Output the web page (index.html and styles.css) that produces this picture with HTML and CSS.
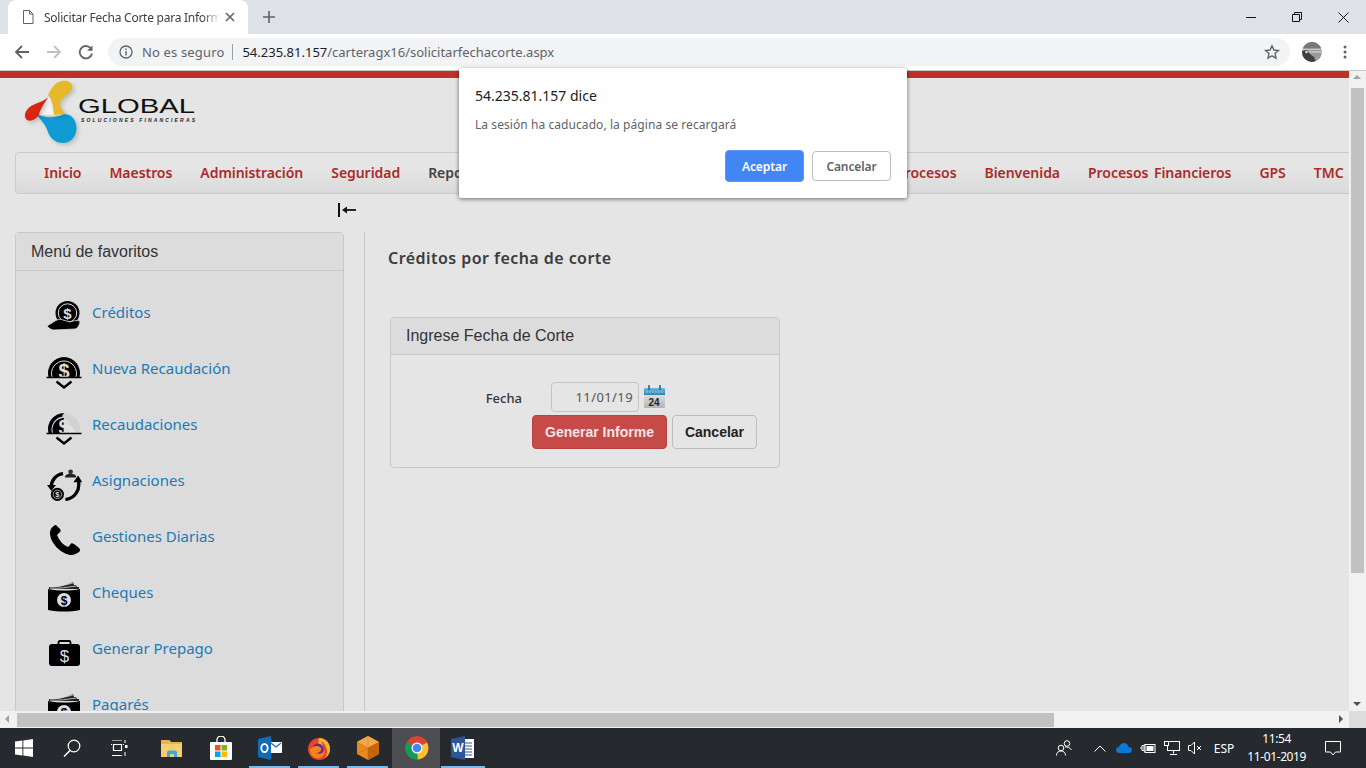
FILE: index.html
```html
<!DOCTYPE html>
<html lang="es">
<head>
  <meta charset="UTF-8">
  <title>Solicitar Fecha Corte para Informe</title>
  <link rel="stylesheet" href="styles.css">
</head>
<body>

  <!-- barra de pestañas -->
  <div class="tabstrip">
    <div class="tab">
      <svg class="tab-doc" width="12" height="14" viewBox="0 0 12 14"><path d="M1.5 .5h6l3.500 3.500v9.500h-9.500z M7.500 .5v3.500h3.500" fill="none" stroke="#5f6368"/></svg>
      <span class="tab-title">Solicitar Fecha Corte para Informe</span>
      <svg class="tab-x" width="10" height="10" viewBox="0 0 10 10"><path d="M1 1l8 8M9 1l-8 8" stroke="#5f6368" stroke-width="1.600"/></svg>
    </div>
    <svg class="tab-new" width="12" height="12" viewBox="0 0 12 12"><path d="M6 0v12M0 6h12" stroke="#5f6368" stroke-width="1.600"/></svg>
    <div class="winbtns">
      <svg width="10" height="10" viewBox="0 0 10 10"><path d="M0 5.500h10" stroke="#111"/></svg>
      <svg width="10" height="10" viewBox="0 0 10 10"><path d="M.5 2.500h7v7h-7z M2.500 2.500v-2h7v7h-2" fill="none" stroke="#111"/></svg>
      <svg width="11" height="11" viewBox="0 0 11 11"><path d="M.5 .5l10 10M10.500 .5l-10 10" stroke="#111"/></svg>
    </div>
  </div>

  <!-- barra de direcciones -->
  <div class="toolbar">
    <svg class="tool" width="16" height="16" viewBox="0 0 16 16"><path d="M15 8H2M8 2L2 8l6 6" fill="none" stroke="#5f6368" stroke-width="1.800"/></svg>
    <svg class="tool" width="16" height="16" viewBox="0 0 16 16"><path d="M1 8h13M8 2l6 6-6 6" fill="none" stroke="#bdc1c6" stroke-width="1.800"/></svg>
    <svg class="tool" width="16" height="16" viewBox="0 0 16 16"><path d="M13.500 5.500A6.200 6.200 0 1 0 14 9.500" fill="none" stroke="#5f6368" stroke-width="1.800"/><path d="M14.500 1.500v5.300h-5.300z" fill="#5f6368"/></svg>
    <div class="omnibox">
      <svg width="14" height="14" viewBox="0 0 14 14"><circle cx="7" cy="7" r="6" fill="none" stroke="#5f6368" stroke-width="1.300"/><path d="M7 6v4.500M7 3.500v1.500" stroke="#5f6368" stroke-width="1.400"/></svg>
      <span class="notsafe">No es seguro</span>
      <span class="url"><b>54.235.81.157</b>/carteragx16/solicitarfechacorte.aspx</span>
      <svg class="star" width="16" height="16" viewBox="0 0 16 16"><path d="M8 1.800l1.900 4.200 4.600.5-3.400 3.100.9 4.500L8 11.800l-4 2.300.9-4.500L1.500 6.500l4.600-.5z" fill="none" stroke="#5f6368" stroke-width="1.400"/></svg>
    </div>
    <svg class="avatar" width="20" height="20" viewBox="0 0 20 20"><defs><clipPath id="av"><circle cx="10" cy="10" r="10"/></clipPath></defs><g clip-path="url(#av)"><rect width="20" height="20" fill="#9a9a9a"/><rect y="7" width="20" height="1" fill="#c8c8c8"/><rect y="9" width="20" height="2" fill="#bdbdbd"/><rect y="0" width="20" height="6" fill="#777"/><path d="M0 9l5-1 3 4 4 3 2 5H0z" fill="#3f3f3f"/><circle cx="4.500" cy="10" r="1.300" fill="#e0e0e0"/></g></svg>
    <svg class="dots" width="4" height="14" viewBox="0 0 4 14"><circle cx="2" cy="2" r="1.500" fill="#5f6368"/><circle cx="2" cy="7" r="1.500" fill="#5f6368"/><circle cx="2" cy="12" r="1.500" fill="#5f6368"/></svg>
  </div>

  <!-- ventana de la pagina -->
  <div class="viewport">
    <div class="page">
      <div class="redbar"></div>

      <div class="logo-row">
        <svg class="logo" width="180" height="70" viewBox="0 0 180 70">
          <path class="logo-blobs" d="M27 18L16 37l26 1z" fill="#f4f4f4"/>
          <path class="logo-blobs" d="M14 36C20 39 32 41 41 36.500C49 35 54.500 42 54.500 50C54.500 59 48 65 41 65C33 65 28 60 26 54C24 47 19 42 14 36z" fill="#0f9bd3"/>
          <path class="logo-blobs" d="M26 17C29 12 32 4 40 3C47 2 52 6 49.500 12C47 17 38 20 38 26C38 30 41 33 43 36L32 37C31 30 31 22 26 17z" fill="#e8b82b"/>
          <path class="logo-blobs" d="M27 18C24 23 16 24 9 28C3 32 1 39 5 42C9 44 14 41 17 37C18 31 22 26 27 18z" fill="#d9240f"/>
          <text class="logo-name" x="56" y="35" textLength="117" lengthAdjust="spacingAndGlyphs">GLOBAL</text>
          <text class="logo-sub" x="59" y="44" textLength="114" lengthAdjust="spacing">SOLUCIONES FINANCIERAS</text>
        </svg>
      </div>

      <nav class="mainnav">
        <a href="#">Inicio</a>
        <a href="#">Maestros</a>
        <a href="#">Administración</a>
        <a href="#">Seguridad</a>
        <a href="#" class="current">Reportes</a>
        <span class="nav-covered"></span>
        <a href="#">Procesos</a>
        <a href="#">Bienvenida</a>
        <a href="#">Procesos Financieros</a>
        <a href="#">GPS</a>
        <a href="#">TMC</a>
      </nav>

      <div class="toggle-row">
        <svg width="18" height="14" viewBox="0 0 18 14"><path d="M1 0v14" stroke="#111" stroke-width="2"/><path d="M18 7H6" stroke="#111" stroke-width="1.800"/><path d="M4 7l5-3.500v7z" fill="#111"/></svg>
      </div>

      <div class="columns">
        <aside class="favs">
          <div class="panel-head">Menú de favoritos</div>
          <ul class="favlist">
            <li>
              <svg width="36" height="32" viewBox="0 0 36 32"><circle cx="21.500" cy="12" r="12" fill="#000"/><circle cx="21.500" cy="12" r="9.200" fill="none" stroke="#ddd"/><text class="coin-s" x="21.500" y="17.500" font-size="15">$</text><path d="M1 25l8-5c3-2 6-2 8-1l7 2c3-1 6-2 10-1 0 4-3 8-5 8l-21 1c-3 0-5-2-7-4z" fill="#000" stroke="#ddd" stroke-width=".8"/></svg>
              <a href="#">Créditos</a>
            </li>
            <li>
              <svg width="36" height="32" viewBox="0 0 36 32"><path d="M2.500 20a16 16 0 1 1 31 0z" fill="#000"/><path d="M6 20a12.500 12.500 0 1 1 24 0" fill="none" stroke="#ddd"/><text class="coin-s" x="18" y="21" font-size="20">$</text><path d="M.5 20.500h35" stroke="#000" stroke-width="1.300"/><path d="M10.500 24.500l7.500 6 7.500-6" fill="none" stroke="#000" stroke-width="2.400"/></svg>
              <a href="#">Nueva Recaudación</a>
            </li>
            <li>
              <svg width="36" height="32" viewBox="0 0 36 32"><path d="M18 20h15.500a16 16 0 1 0-31 0z" fill="#d2d2d2"/><path d="M6 20a12.500 12.500 0 0 1 24 0h-12z" fill="#e2e2e2"/><path d="M2.500 20A16 16 0 0 1 18 0c-2 3-2 3-1 3.500a13 13 0 0 0-11 16.500z" fill="#000"/><path d="M7 20A11.500 11.500 0 0 1 18 5v15z" fill="#000"/><text class="coin-s" x="18" y="21" font-size="20">$</text><path d="M.5 20.500h35" stroke="#000" stroke-width="1.300"/><path d="M10.500 24.500l7.500 6 7.500-6" fill="none" stroke="#000" stroke-width="2.400"/></svg>
              <a href="#">Recaudaciones</a>
            </li>
            <li>
              <svg width="36" height="34" viewBox="0 0 36 34"><path d="M4.500 20A14 14 0 0 1 17 5M33.500 13c1.500 10-4 18-14 19.500" fill="none" stroke="#000" stroke-width="3.500"/><path d="M0 17h9.500l-5 6.500zM28 14h9.500l-4.500-7z" fill="#000"/><circle cx="25" cy="3" r="2.500" fill="#333"/><path d="M19 9c0-3 3-4 6-4s6 1 6 4z" fill="#222"/><circle cx="11" cy="27" r="7" fill="#000"/><circle cx="11" cy="27" r="4.500" fill="none" stroke="#ccc" stroke-width=".8"/><text class="coin-s" x="11" y="30" font-size="8">$</text></svg>
              <a href="#">Asignaciones</a>
            </li>
            <li>
              <svg width="36" height="32" viewBox="0 0 36 32"><path transform="translate(3 0)" d="M6 0c-3 2-5 4-5 8 0 10 11 21 21 22 3 0 5-1 8-3 2-2 1-3-1-5l-4-3c-2-1-3-1-4 1l-2 2c-5-2-9-7-11-12l2-2c2-1 2-3 1-4L8 1C7 0 7 0 6 0z" fill="#000"/></svg>
              <a href="#">Gestiones Diarias</a>
            </li>
            <li>
              <svg width="36" height="32" viewBox="0 0 36 32"><path d="M3 6c10 1 17-2 24-5l1 3 2 0 1 2 2 0v2H3z" fill="#222"/><path d="M4 5c8 1 15-1 23-3M4 7c9 1 18-1 26-2" stroke="#ddd" stroke-width=".8" fill="none"/><path d="M2 8c11 2 22 2 32 0v21c-10 2-21 2-32 0z" fill="#000"/><circle cx="18" cy="19" r="7" fill="#ddd"/><text class="coin-d" x="18" y="23.500" font-size="12">$</text></svg>
              <a href="#">Cheques</a>
            </li>
            <li>
              <svg width="36" height="32" viewBox="0 0 36 32"><path d="M12.500 8V5.500c0-1 .5-1.500 1.500-1.500h9c1 0 1.500.5 1.500 1.500V8" fill="none" stroke="#000" stroke-width="1.800"/><rect x="3" y="7" width="31" height="22" rx="3" fill="#000"/><text class="coin-w" x="18.500" y="24.500" font-size="17">$</text></svg>
              <a href="#">Generar Prepago</a>
            </li>
            <li>
              <svg width="36" height="32" viewBox="0 0 36 32"><path d="M3 6c10 1 17-2 24-5l1 3 2 0 1 2 2 0v2H3z" fill="#222"/><path d="M4 5c8 1 15-1 23-3M4 7c9 1 18-1 26-2" stroke="#ddd" stroke-width=".8" fill="none"/><path d="M2 8c11 2 22 2 32 0v21c-10 2-21 2-32 0z" fill="#000"/><circle cx="18" cy="19" r="7" fill="#ddd"/><text class="coin-d" x="18" y="23.500" font-size="12">$</text></svg>
              <a href="#">Pagarés</a>
            </li>
          </ul>
        </aside>

        <main class="content">
          <h3>Créditos por fecha de corte</h3>
          <section class="card">
            <div class="panel-head">Ingrese Fecha de Corte</div>
            <div class="card-body">
              <div class="date-row">
                <label>Fecha</label>
                <div class="date-input">11/01/19</div>
                <svg class="cal" width="24" height="24" viewBox="0 0 24 24">
                  <defs>
                    <linearGradient id="calbody" x1="0" y1="0" x2="0" y2="1"><stop offset="0" stop-color="#f2f2f2"/><stop offset="1" stop-color="#b4b4b4"/></linearGradient>
                    <linearGradient id="caltop" x1="0" y1="0" x2="0" y2="1"><stop offset="0" stop-color="#6fb6dc"/><stop offset="1" stop-color="#2e84b6"/></linearGradient>
                  </defs>
                  <rect x="1" y="3" width="21" height="20" rx="1" fill="url(#calbody)"/>
                  <path d="M1 4a1 1 0 0 1 1-1h19a1 1 0 0 1 1 1v6H1z" fill="url(#caltop)"/>
                  <path d="M6 0v5M17 0v5" stroke="#35637f" stroke-width="1.600"/>
                  <path d="M3 7h17" stroke="#bfe0f0" stroke-width=".8" stroke-dasharray="2 1"/>
                  <text class="cal-num" x="11" y="21">24</text>
                </svg>
              </div>
              <div class="btn-row">
                <button class="btn-red">Generar Informe</button>
                <button class="btn-plain">Cancelar</button>
              </div>
            </div>
          </section>
        </main>
      </div>
    </div>

    <div class="vscroll">
      <span class="arrow-up"></span>
      <div class="vthumb"></div>
      <span class="arrow-down"></span>
    </div>
  </div>

  <div class="hscroll">
    <span class="arrow-left"></span>
    <div class="hthumb"></div>
    <span class="arrow-right"></span>
    <div class="corner"></div>
  </div>

  <!-- barra de tareas -->
  <div class="taskbar">
    <div class="task">
      <svg width="18" height="18" viewBox="0 0 18 18"><path d="M0 2.600l7.400-1v7H0zM8.300 1.400L18 0v8.600H8.300zM0 9.400h7.400v7l-7.400-1zM8.300 9.400H18V18l-9.700-1.400z" fill="#fff"/></svg>
    </div>
    <div class="task">
      <svg width="18" height="18" viewBox="0 0 18 18"><circle cx="11" cy="7" r="5.800" fill="none" stroke="#fff" stroke-width="1.200"/><path d="M7 11.500L1 17.500" stroke="#fff" stroke-width="1.500"/></svg>
    </div>
    <div class="task">
      <svg width="18" height="16" viewBox="0 0 18 16"><path d="M1 0h10M1 15.500h10M2.500 4.500h8v6h-8z" fill="none" stroke="#fff" stroke-width="1.200"/><path d="M0 4.500h1M12 4.500h1" stroke="#fff"/><path d="M14 0v3M14 12v4" stroke="#fff"/><rect x="14" y="5" width="2.500" height="3" fill="#fff"/></svg>
    </div>
    <div class="task-gap"></div>
    <div class="task app">
      <svg width="22" height="19" viewBox="0 0 22 19"><path d="M0 1h8l2 2h11v15H0z" fill="#f4cf71"/><path d="M0 1h8l2 2h11v2H0z" fill="#e5b650"/><path d="M6 18v-4.500c0-1 1-2 2-2h6c1 0 2 1 2 2V18h-3v-3H9v3z" fill="#3ba9dd"/></svg>
    </div>
    <div class="task app">
      <svg width="24" height="24" viewBox="0 0 24 24"><path d="M8 6V4a4 4 0 0 1 8 0v2" fill="none" stroke="#fff" stroke-width="1.300"/><rect x="1" y="6" width="22" height="18" rx="1" fill="#fff"/><rect x="6" y="9" width="5.500" height="5.500" fill="#f25022"/><rect x="12.500" y="9" width="5.500" height="5.500" fill="#7fba00"/><rect x="6" y="15.500" width="5.500" height="5.500" fill="#00a4ef"/><rect x="12.500" y="15.500" width="5.500" height="5.500" fill="#ffb900"/></svg>
    </div>
    <div class="task running">
      <svg width="24" height="24" viewBox="0 0 24 24"><rect x="12" y="6" width="12" height="11" fill="#fff"/><path d="M13 7l5 4 5-4" fill="none" stroke="#0f6cb8" stroke-width="1.200"/><path d="M0 3l13-3v24L0 21z" fill="#0f6cb8"/><ellipse cx="6.500" cy="12" rx="3.200" ry="4" fill="none" stroke="#fff" stroke-width="1.800"/></svg>
    </div>
    <div class="task running">
      <svg width="24" height="24" viewBox="0 0 24 24"><circle cx="12" cy="13" r="11" fill="#e8452a"/><path d="M12 2c7 0 11 5 11 11 0 4-2 7-5 9 2-3 3-7 1-11-1-3-3-5-5-6l2 5-5-1z" fill="#fbb52b"/><circle cx="11" cy="13" r="5.500" fill="#5b2e9e"/><path d="M6 11c3-2 7-1 8 1 1 3-2 5-5 5 4 2 8 0 9-3 0 5-4 9-8 8-4 0-7-4-7-8 0-1 1-2 3-3z" fill="#f58220"/></svg>
    </div>
    <div class="task running">
      <svg width="22" height="24" viewBox="0 0 22 24"><path d="M11 0l11 6v12l-11 6L0 18V6z" fill="#e8891f"/><path d="M11 0l11 6-11 6L0 6z" fill="#f3a84a"/><path d="M11 12l11-6v12l-11 6z" fill="#c4650f"/><path d="M11 0v24M0 18l22-12M0 6l22 12" stroke="#a9560c" stroke-width=".5" opacity=".6"/></svg>
    </div>
    <div class="task active">
      <svg width="24" height="24" viewBox="0 0 24 24"><circle cx="12" cy="12" r="11.500" fill="#db4437"/><path d="M12 12L22 6.500A11.500 11.500 0 0 1 12.500 23.500z" fill="#fbc02d"/><path d="M12 12L12.500 23.500A11.500 11.500 0 0 1 2 6z" fill="#0f9d58"/><path d="M2 6A11.500 11.500 0 0 1 22 6H12z" fill="#db4437"/><circle cx="12" cy="12" r="5.500" fill="#fff"/><circle cx="12" cy="12" r="4.300" fill="#4285f4"/></svg>
    </div>
    <div class="task running last">
      <svg width="24" height="24" viewBox="0 0 24 24"><rect x="11" y="3" width="12" height="19" fill="#fff"/><path d="M14 7h7M14 10h7M14 13h7M14 16h7M14 19h7" stroke="#2b579a"/><path d="M0 3l14-3v24L0 21z" fill="#2b579a"/><text class="word-w" x="7" y="16">W</text></svg>
    </div>

    <div class="tray">
      <svg width="16" height="16" viewBox="0 0 16 16"><circle cx="5" cy="8" r="2.800" fill="none" stroke="#fff"/><path d="M.5 15.500c0-3 2-4.500 4.500-4.500s4.500 1.500 4.500 4.500" fill="none" stroke="#fff"/><circle cx="11" cy="3.500" r="2.800" fill="none" stroke="#fff"/><path d="M9 7c2-.5 5 .5 6.500 3" fill="none" stroke="#fff"/></svg>
      <svg class="tray-caret" width="12" height="7" viewBox="0 0 12 7"><path d="M.5 6.500L6 1l5.500 5.500" fill="none" stroke="#fff"/></svg>
      <svg width="16" height="10" viewBox="0 0 16 10"><path d="M3 10C1 10 0 8.500 0 7c0-2 1.500-3 3-3 1-3 3-4 5-4s4 1.500 4.500 4c2 0 3.500 1.500 3.500 3s-1 3-3 3z" fill="#0a78d7"/></svg>
      <svg width="16" height="12" viewBox="0 0 16 12"><path d="M0 6h2M2 3.500h2v5H2zM4 3h1.500M4 9h1.500" stroke="#fff" fill="none"/><rect x="5" y="2.500" width="10" height="8" fill="none" stroke="#fff"/><rect x="6.500" y="4" width="7" height="5" fill="#fff"/></svg>
      <svg width="16" height="14" viewBox="0 0 16 14"><rect x="3.500" y=".5" width="12" height="9" fill="none" stroke="#fff"/><rect x=".5" y=".5" width="4" height="4" fill="#26292d" stroke="#fff"/><path d="M9.500 9.500v3M6 13.500h7" stroke="#fff"/></svg>
      <svg width="14" height="14" viewBox="0 0 14 14"><path d="M.5 4.500h2.500L6.500 1v12L3 9.500H.5z" fill="none" stroke="#fff"/><path d="M9 5l4 4M13 5l-4 4" stroke="#fff"/></svg>
      <span class="lang">ESP</span>
      <div class="clock"><span>11:54</span><span>11-01-2019</span></div>
      <svg class="notif" width="16" height="15" viewBox="0 0 16 15"><path d="M.5 .5h15v10.500h-5l-2.500 3-2.500-3h-5z" fill="none" stroke="#fff"/></svg>
    </div>
  </div>

  <!-- alerta del navegador -->
  <div class="alert">
    <div class="alert-title">54.235.81.157 dice</div>
    <div class="alert-msg">La sesión ha caducado, la página se recargará</div>
    <div class="alert-btns">
      <button class="ok">Aceptar</button>
      <button class="no">Cancelar</button>
    </div>
  </div>

</body>
</html>
```

FILE: styles.css
```css
* {
  box-sizing: border-box;
}

html, body {
  height: 100%;
}

body {
  margin: 0;
  width: 1366px;
  height: 768px;
  overflow: hidden;
  display: flex;
  flex-direction: column;
  font-family: "Noto Sans", "Open Sans", sans-serif;
  background: #fff;
}

/* chrome */
.tabstrip {
  height: 34px;
  background: #dee1e6;
  display: flex;
  align-items: center;
  flex-shrink: 0;
}

.tab {
  width: 240px;
  height: 34px;
  margin-left: 8px;
  background: #fff;
  border-radius: 8px 8px 0 0;
  display: flex;
  align-items: center;
  padding: 0 11px 0 14px;
}

.tab-title {
  font-size: 12px;
  letter-spacing: -.25px;
  color: #3c4043;
  margin-left: 10px;
  width: 176px;
  flex-shrink: 0;
  white-space: nowrap;
  overflow: hidden;
  -webkit-mask-image: linear-gradient(to right, #000 90%, transparent);
  mask-image: linear-gradient(to right, #000 90%, transparent);
}

.tab-x {
  margin-left: 5px;
}

.tab-new {
  margin-left: 15px;
}

.winbtns {
  margin-left: auto;
  display: flex;
  align-items: center;
  gap: 36px;
  padding-right: 17px;
}

.toolbar {
  height: 37px;
  background: #fff;
  border-bottom: 1px solid #c8c9cb;
  display: flex;
  align-items: center;
  flex-shrink: 0;
  padding: 0 0 0 14px;
}

.tool {
  margin-right: 16px;
}

.omnibox {
  width: 1182px;
  height: 28px;
  margin-left: -2px;
  background: #f1f3f4;
  border-radius: 14px;
  display: flex;
  align-items: center;
  padding: 0 10px 0 11px;
  font-size: 13px;
}

.notsafe {
  color: #5f6368;
  margin-left: 9px;
  padding-right: 8px;
  letter-spacing: .15px;
  border-right: 1px solid #9aa0a6;
  line-height: 16px;
}

.url {
  margin-left: 9px;
  color: #5f6368;
}

.url b {
  font-weight: normal;
  color: #202124;
}

.star {
  margin-left: auto;
}

.avatar {
  margin-left: 12px;
}

.dots {
  margin-left: 21px;
}

/* pagina */
.viewport {
  height: 640px;
  display: flex;
  flex-shrink: 0;
  background: #e5e5e5;
}

.page {
  width: 1349px;
  overflow: hidden;
  font-family: "Noto Sans", sans-serif;
}

.redbar {
  height: 7px;
  background: #c0302b;
}

.logo-row {
  height: 74px;
  padding-left: 22px;
}

.logo {
  display: block;
}

.logo-blobs {
  filter: drop-shadow(2px 2px 2px rgba(0, 0, 0, .18));
}

.logo-name {
  font-family: "Liberation Sans", sans-serif;
  font-size: 21px;
  fill: #111;
}

.logo-sub {
  font-family: "Liberation Sans", sans-serif;
  font-size: 5px;
  font-weight: bold;
  font-style: italic;
  fill: #222;
}

.mainnav {
  width: 1400px;
  height: 42px;
  margin-left: 15px;
  padding: 0 0 2px 28px;
  display: flex;
  align-items: center;
  gap: 28px;
  border: 1px solid #cbcbcb;
  border-radius: 4px;
  background: linear-gradient(#e5e5e5 40%, #d9d9d9);
  font-size: 14px;
  letter-spacing: -.05px;
  word-spacing: 2px;
  font-weight: 600;
}

.mainnav a {
  color: #ad2a2a;
  text-decoration: none;
  white-space: nowrap;
}

.mainnav a.current {
  color: #444;
}

/* menus que quedan tapados por la alerta */
.nav-covered {
  width: 351px;
  flex-shrink: 0;
}

.toggle-row {
  height: 38px;
  padding: 9px 0 0 338px;
}

.toggle-row svg {
  display: block;
}

.columns {
  display: flex;
  height: 479px;
}

.favs {
  width: 329px;
  height: 520px;
  margin-left: 15px;
  flex-shrink: 0;
  background: #dcdcdc;
  border: 1px solid #c8c8c8;
  border-radius: 4px 4px 0 0;
}

.panel-head {
  height: 38px;
  padding: 0 15px;
  display: flex;
  align-items: center;
  font-family: "Liberation Sans", sans-serif;
  font-size: 16px;
  color: #333;
  background: #dcdcdc;
  border-bottom: 1px solid #c8c8c8;
}

.favlist {
  list-style: none;
  margin: 0;
  padding: 14px 0 0 30px;
}

.favlist li {
  height: 56px;
  display: flex;
  align-items: flex-start;
  gap: 10px;
  padding-top: 16px;
}

.favlist svg {
  flex-shrink: 0;
  width: 36px;
  height: 32px;
}

.favlist a {
  font-size: 15px;
  line-height: 20px;
  margin-top: 1px;
  color: #1a7ab8;
  text-decoration: none;
}

.coin-s, .coin-d, .coin-w {
  font-family: "Liberation Sans", sans-serif;
  font-weight: bold;
  text-anchor: middle;
}

.coin-s {
  fill: #ddd;
}

.coin-d {
  fill: #000;
}

.coin-w {
  fill: #ddd;
  font-weight: normal;
}

.content {
  margin-left: 20px;
  padding-left: 23px;
  flex: 1;
  border-left: 1px solid #c8c8c8;
}

.content h3 {
  margin: 15px 0 0;
  font-size: 16px;
  line-height: 22px;
  font-weight: 600;
  letter-spacing: .45px;
  color: #3c3c3c;
}

.card {
  width: 390px;
  height: 151px;
  margin: 48px 0 0 2px;
  border: 1px solid #c8c8c8;
  border-radius: 4px;
}

.card .panel-head {
  height: 37px;
}

.card-body {
  padding-top: 27px;
}

.date-row {
  display: flex;
  align-items: center;
  height: 30px;
}

.date-row label {
  width: 131px;
  padding-top: 2px;
  font-size: 13px;
  font-weight: 500;
  color: #333;
  text-align: right;
  margin-right: 29px;
}

.date-input {
  width: 88px;
  height: 30px;
  line-height: 28px;
  border: 1px solid #c4c4c4;
  border-radius: 4px;
  padding-right: 5px;
  text-align: right;
  font-size: 13px;
  letter-spacing: .4px;
  color: #555;
}

.cal {
  margin-left: 4px;
}

.cal-num {
  font-family: "Liberation Sans", sans-serif;
  font-size: 10px;
  font-weight: bold;
  text-anchor: middle;
  fill: #222;
}

.btn-row {
  display: flex;
  gap: 5px;
  margin: 3px 0 0 141px;
}

.btn-row button {
  height: 34px;
  border-radius: 4px;
  font-family: "Liberation Sans", sans-serif;
  font-size: 14px;
  font-weight: bold;
  cursor: pointer;
}

.btn-red {
  width: 135px;
  background: #c64a48;
  border: 1px solid #b94240;
  color: #f2e6e6;
}

.btn-plain {
  width: 85px;
  background: #e5e5e5;
  border: 1px solid #bdbdbd;
  color: #222;
}

/* barras de desplazamiento */
.vscroll {
  width: 17px;
  background: #f1f1f1;
  position: relative;
  padding: 17px 2px 0;
  flex-shrink: 0;
}

.vthumb {
  height: 485px;
  background: #c1c1c1;
}

.arrow-up, .arrow-down, .arrow-left, .arrow-right {
  position: absolute;
  width: 0;
  height: 0;
  border: 4px solid transparent;
}

.arrow-up {
  top: 4px;
  left: 4px;
  border-width: 0 4px 4px;
  border-bottom-color: #a3a3a3;
}

.arrow-down {
  bottom: 5px;
  left: 4px;
  border-width: 4px 4px 0;
  border-top-color: #505050;
}

.hscroll {
  height: 17px;
  background: #f1f1f1;
  position: relative;
  display: flex;
  padding: 2px 0 1px 17px;
  flex-shrink: 0;
}

.hthumb {
  width: 1037px;
  background: #c1c1c1;
}

.arrow-left {
  left: 5px;
  top: 4px;
  border-width: 4px 4px 4px 0;
  border-right-color: #a3a3a3;
}

.arrow-right {
  left: 1339px;
  top: 4px;
  border-width: 4px 0 4px 4px;
  border-left-color: #505050;
}

.corner {
  position: absolute;
  right: 0;
  top: 0;
  width: 17px;
  height: 17px;
  background: #dcdcdc;
}

/* barra de tareas */
.taskbar {
  flex: 1;
  background: #26292d;
  display: flex;
  align-items: stretch;
  color: #fff;
}

.task {
  width: 48px;
  display: flex;
  align-items: center;
  justify-content: center;
  flex-shrink: 0;
}

.task-gap {
  width: 3px;
}

.task.app {
  width: 49px;
}

.task.running {
  width: 41px;
  margin: 0 4px;
  border-top: 2px solid transparent;
  border-bottom: 2px solid #76b9ed;
}

.task.active {
  width: 49px;
  background: linear-gradient(to right, #4b4d50 48px, transparent 48px);
}

.task.running.last {
  width: 44px;
  margin: 0;
}

.tray {
  margin-left: auto;
  display: flex;
  align-items: center;
  gap: 8px;
  padding-right: 25px;
}

.tray-caret {
  margin: 0 2px 0 14px;
}

.lang {
  font-size: 12px;
  margin-left: 4px;
}

.clock {
  display: flex;
  flex-direction: column;
  align-items: center;
  font-size: 12px;
  letter-spacing: -.4px;
  line-height: 18px;
  margin: 0 11px 0 5px;
}

.word-w {
  font-family: "Liberation Sans", sans-serif;
  font-size: 12px;
  font-weight: bold;
  text-anchor: middle;
  fill: #fff;
}

/* alerta */
.alert {
  position: absolute;
  left: 459px;
  top: 68px;
  width: 448px;
  height: 130px;
  background: #fff;
  border-radius: 2px;
  box-shadow: 0 1px 4px rgba(0, 0, 0, .55);
  padding: 18px 16px 0;
}

.alert-title {
  font-size: 14px;
  line-height: 20px;
  color: #202124;
}

.alert-msg {
  font-size: 12px;
  letter-spacing: .07px;
  line-height: 16px;
  color: #5f6368;
  margin-top: 11px;
}

.alert-btns {
  display: flex;
  justify-content: flex-end;
  align-items: center;
  gap: 8px;
  margin-top: 17px;
}

.alert-btns button {
  width: 79px;
  border-radius: 4px;
  font-family: "Noto Sans", sans-serif;
  font-size: 12px;
  letter-spacing: -.1px;
  font-weight: 600;
  cursor: pointer;
}

.ok {
  height: 32px;
  background: #4285f4;
  border: 1px solid #5e97f6;
  color: #fff;
}

.no {
  height: 30px;
  background: #fff;
  border: 1px solid #bdbdbd;
  color: #5f6368;
}
```
